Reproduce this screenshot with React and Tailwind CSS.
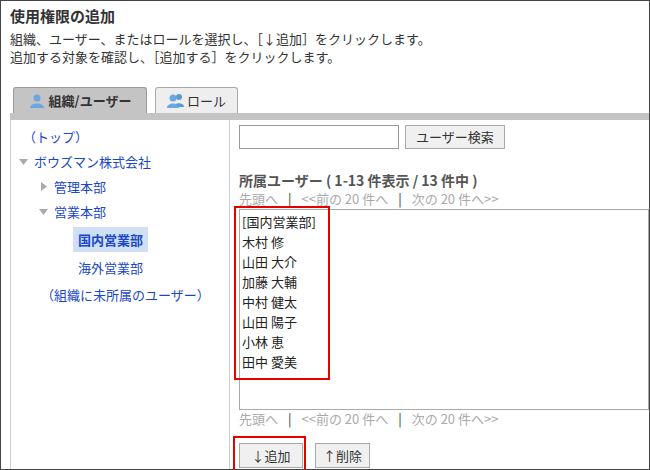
export default function App() {
  const f = { fontFamily: '"Noto Sans CJK JP","Liberation Sans",sans-serif' };
  const users = ["[国内営業部]", "木村 修", "山田 大介", "加藤 大輔", "中村 健太", "山田 陽子", "小林 恵", "田中 愛美"];
  const Pager = ({ cls }) => (
    <div className={`text-[13px] text-[#aaaaaa] flex gap-[10px] h-[18px] items-center ${cls}`}>
      <span>先頭へ</span><span className="text-[#333]">|</span><span>&lt;&lt;前の 20 件へ</span><span className="text-[#333]">|</span><span>次の 20 件へ&gt;&gt;</span>
    </div>
  );
  const Tri = ({ down }) => (
    <svg width="9" height="9" viewBox="0 0 9 9" className="mr-[6px]">
      {down ? <path d="M0 2h9L4.5 8z" fill="#aaa" /> : <path d="M2 0v9l6-4.5z" fill="#aaa" />}
    </svg>
  );
  const UserIcon = ({ two }) => (
    <svg width="18" height="16" viewBox="0 0 18 16" className="mr-[2px]">
      {two && <><circle cx="12" cy="4" r="3" fill="#5b9bd5" /><path d="M7 14c0-5 10-5 10 0z" fill="#5b9bd5" /></>}
      <circle cx={two ? 6 : 8} cy="5" r="3.5" fill="#6ba7e0" />
      <path d={two ? "M0 15c0-6 12-6 12 0z" : "M1 15c0-6 14-6 14 0z"} fill="#6ba7e0" />
    </svg>
  );
  return (
    <div style={f} className="w-[650px] h-[470px] border border-[#444] bg-white overflow-hidden text-[#333]">
      <div className="px-[9px] pt-[4px]">
        <div className="text-[15px] font-bold h-[22px] leading-[22px]">使用権限の追加</div>
        <div className="text-[13px] leading-[18px] mt-[3px]">組織、ユーザー、またはロールを選択し、［↓追加］をクリックします。</div>
        <div className="text-[13px] leading-[18px]">追加する対象を確認し、［追加する］をクリックします。</div>
      </div>
      <div className="ml-[9px] mt-[21px] pl-[3px] flex gap-[8px] h-[26px]">
        <div className="bg-[#c4c4c4] border border-b-0 border-[#999] rounded-t-[3px] w-[134px] h-[26px] flex items-center justify-center text-[13px] font-bold">
          <UserIcon />組織/ユーザー
        </div>
        <div className="bg-[#eeeeee] border border-b-0 border-[#aaa] rounded-t-[3px] w-[83px] h-[26px] flex items-center justify-center text-[13px]">
          <UserIcon two />ロール
        </div>
      </div>
      <div className="ml-[9px] h-[7px] bg-[#c4c4c4]" />
      <div className="ml-[9px] flex h-[350px] border-l border-[#ccc]">
        <div className="w-[219px] border-r border-[#ccc] pt-[4px] text-[13px] text-[#1a47c8]">
          <div className="pl-[12px] h-[25px] leading-[25px]">（トップ）</div>
          <div className="pl-[8px] h-[25px] flex items-center"><Tri down />ボウズマン株式会社</div>
          <div className="pl-[28px] h-[25px] flex items-center"><Tri />管理本部</div>
          <div className="pl-[28px] h-[25px] flex items-center"><Tri down />営業本部</div>
          <div className="pl-[62px] h-[30px] flex items-center"><span className="bg-[#cfe0f4] font-bold px-[5px] h-[25px] leading-[25px]">国内営業部</span></div>
          <div className="pl-[67px] h-[27px] leading-[27px]">海外営業部</div>
          <div className="pl-[30px] h-[27px] leading-[27px]">（組織に未所属のユーザー）</div>
        </div>
        <div className="flex-1 pl-[9px] pt-[5px]">
          <div className="flex gap-[6px] items-center">
            <div className="w-[160px] h-[24px] border border-[#999] bg-white" />
            <div className="h-[24px] px-[10px] border border-[#aaa] bg-[#f0f0f0] text-[13px] flex items-center">ユーザー検索</div>
          </div>
          <div className="mt-[21px] text-[14px] font-bold text-[#555] h-[20px] leading-[20px]">所属ユーザー ( 1-13 件表示 / 13 件中 )</div>
          <Pager />
          <div className="relative border border-[#aaa] h-[201px] mt-[1px] pt-[2px] pl-[2px]">
            <div className="absolute -left-[6px] -top-[4px] w-[96px] h-[174px] border-2 border-[#e60000]" />
            {users.map((u) => <div key={u} className="text-[13px] h-[20px] leading-[20px] text-[#222]">{u}</div>)}
          </div>
          <Pager />
          <div className="flex gap-[12px] mt-[15px] relative">
            <div className="absolute -left-[6px] -top-[7px] w-[73px] h-[36px] border-2 border-[#e60000]" />
            <div className="w-[64px] h-[25px] border border-[#aaa] bg-[#f0f0f0] text-[13px] flex items-center justify-center">↓追加</div>
            <div className="w-[55px] h-[25px] border border-[#aaa] bg-[#f0f0f0] text-[13px] flex items-center justify-center">↑削除</div>
          </div>
        </div>
      </div>
    </div>
  );
}
